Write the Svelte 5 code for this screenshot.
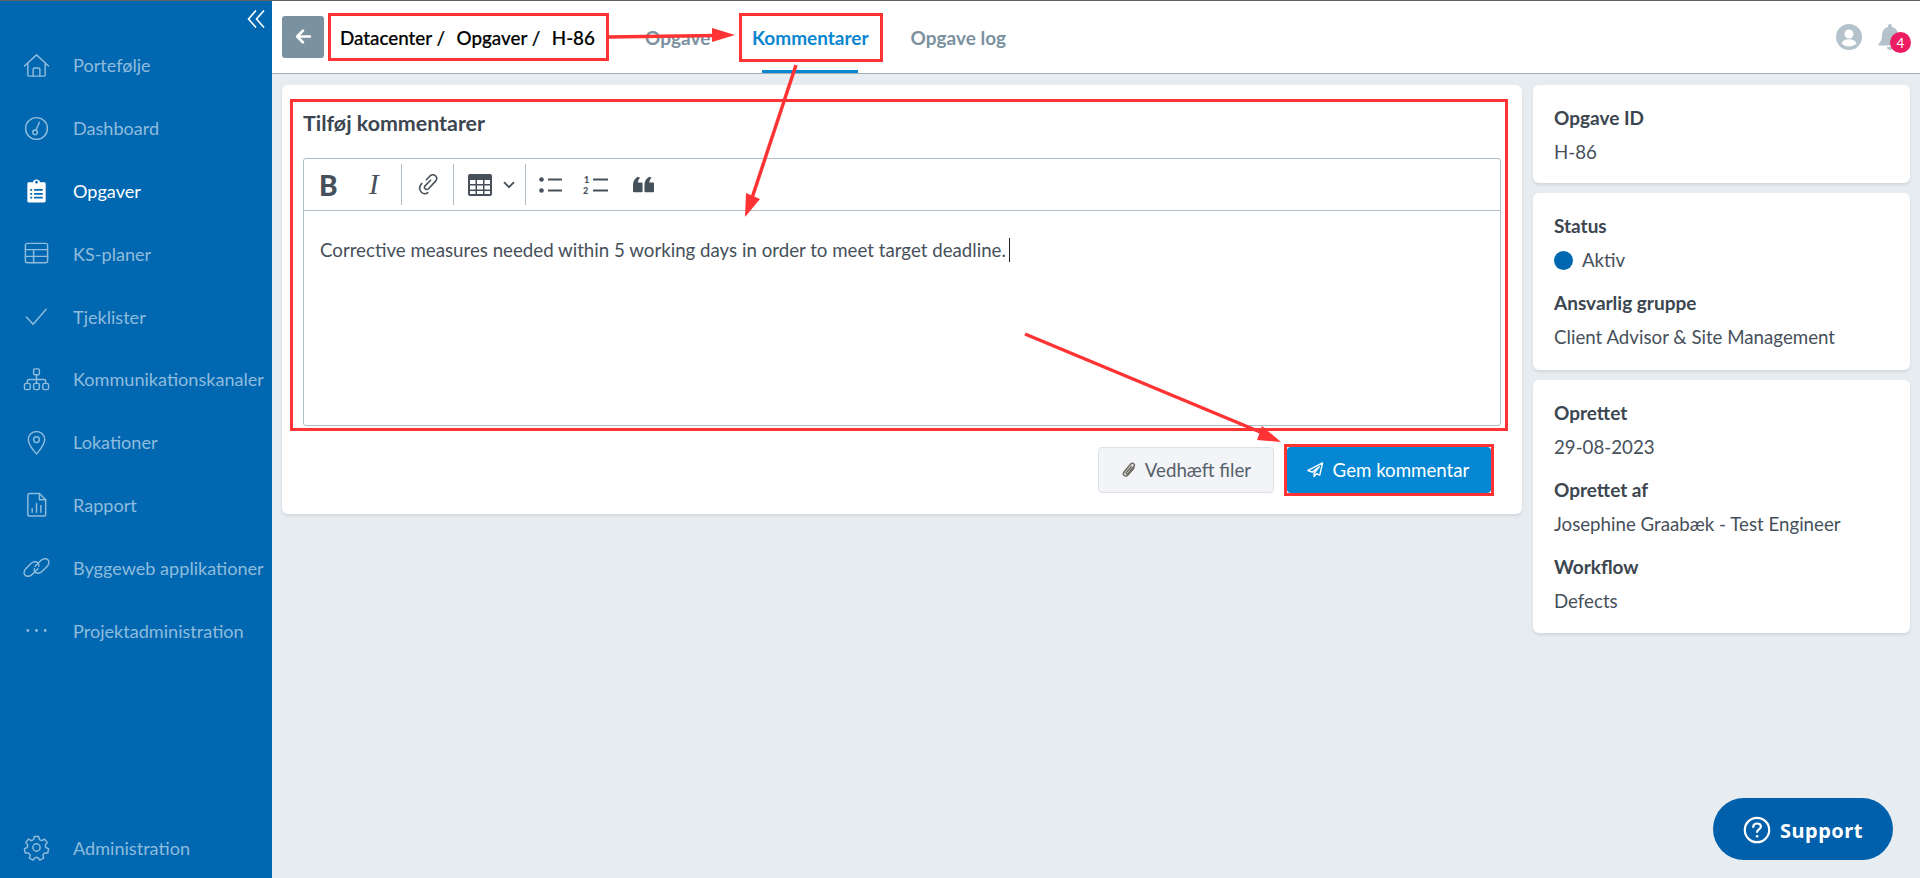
<script>
  const nav = [
    { label: 'Portefølje', icon: 'home' },
    { label: 'Dashboard', icon: 'gauge' },
    { label: 'Opgaver', icon: 'clip', active: true },
    { label: 'KS-planer', icon: 'table' },
    { label: 'Tjeklister', icon: 'check' },
    { label: 'Kommunikationskanaler', icon: 'org' },
    { label: 'Lokationer', icon: 'pin' },
    { label: 'Rapport', icon: 'report' },
    { label: 'Byggeweb applikationer', icon: 'link' },
    { label: 'Projektadministration', icon: 'dots' }
  ];
</script>

{#snippet navIcon(name)}
  <svg class="nav-icon" viewBox="0 0 28 28" fill="none" stroke="currentColor" stroke-width="1.5" stroke-linejoin="round" stroke-linecap="round">
    {#if name === 'home'}
      <path d="M1.5 14.5 14 3 26.5 14.5M5 12v11.500a1.500 1.500 0 0 0 1.500 1.500h15a1.500 1.500 0 0 0 1.500-1.500V12" />
      <path d="M10.500 25v-7a1.500 1.500 0 0 1 1.500-1.500h4a1.500 1.500 0 0 1 1.500 1.500v7" />
    {:else if name === 'gauge'}
      <circle cx="14" cy="14" r="11.300" />
      <circle cx="12.500" cy="18" r="2.400" />
      <path d="M13.500 15.800 17 7.500" />
    {:else if name === 'clip'}
      <path fill="currentColor" stroke="none" fill-rule="evenodd" d="M6 5.500h4.300a3.800 3.800 0 0 1 7.400 0H22a1.500 1.500 0 0 1 1.500 1.500v18a1.500 1.500 0 0 1-1.500 1.500H6A1.500 1.500 0 0 1 4.500 25V7A1.500 1.500 0 0 1 6 5.500ZM14 4a1.400 1.400 0 1 0 0 2.800 1.400 1.400 0 0 0 0-2.800ZM7.500 12.500v1.800h2v-1.800ZM11.500 12.500v1.800h9v-1.800ZM7.500 16.500v1.800h2v-1.800ZM11.500 16.500v1.800h9v-1.800ZM7.500 20.500v1.800h2v-1.800ZM11.500 20.500v1.800h9v-1.800Z" />
    {:else if name === 'table'}
      <rect x="2.500" y="3.500" width="23" height="20" rx="2" />
      <path d="M2.500 10h23M2.500 17h23M11 10v13.500" />
    {:else if name === 'check'}
      <path d="M3.500 14.500 10.500 22 24 6.500" />
    {:else if name === 'org'}
      <rect x="11" y="3" width="6" height="6" rx="1.300" />
      <rect x="1.500" y="18" width="6" height="6.500" rx="1.800" />
      <rect x="11" y="18" width="6" height="6.500" rx="1.800" />
      <rect x="20.500" y="18" width="6" height="6.500" rx="1.800" />
      <path d="M14 9v9M4.500 18v-2.500a1.500 1.500 0 0 1 1.500-1.500h16a1.500 1.500 0 0 1 1.500 1.500V18" />
    {:else if name === 'pin'}
      <path d="M14 26C9.500 20.500 5.500 16.500 5.500 11a8.500 8.500 0 0 1 17 0c0 5.500-4 9.500-8.500 15Z" />
      <circle cx="14" cy="11" r="3" />
    {:else if name === 'report'}
      <path d="M7 2.500h10l6.500 6.500v15a2 2 0 0 1-2 2H7a2 2 0 0 1-2-2V4.500a2 2 0 0 1 2-2Z" />
      <path d="M17 2.500V9h6.500M9.500 22v-3.500M14 22V13M18.500 22v-7" />
    {:else if name === 'link'}
      <path d="M12.500 12.800 18.500 6.800c2.200-2.200 5.500-2.600 7.300-.9s1.300 4.900-.9 7.100L20 18c-2.200 2.200-5.500 2.600-7.300.9-1-1-1.300-2.300-1-3.700" />
      <path d="M15.500 15.200 9.500 21.200c-2.200 2.200-5.500 2.600-7.300.9s-1.300-4.900.9-7.100L8 10c2.200-2.200 5.500-2.600 7.300-.9 1 1 1.300 2.300 1 3.700" />
    {:else if name === 'dots'}
      <path stroke-width="3" d="M5 14h.01M14 14h.01M23 14h.01" />
    {:else if name === 'gear'}
      <circle cx="14" cy="14" r="3.800" />
      <path d="M11.800 2.500h4.400l.8 3.300 2.400 1.100 3-1.600 2.700 3.500-2 2.700.5 2.500 3 1.400-1 4.300-3.400.1-1.600 2 .8 3.300-4 1.900-2.100-2.600h-2.600l-2.100 2.600-4-1.900.8-3.300-1.600-2-3.400-.1-1-4.300 3-1.400.5-2.500-2-2.700 2.700-3.500 3 1.600 2.400-1.100Z" />
    {/if}
  </svg>
{/snippet}

<div class="page">
  <aside class="sidebar">
    <button class="collapse" aria-label="Skjul menu">
      <svg viewBox="0 0 18 18" width="18" height="18" fill="none" stroke="#fff" stroke-width="1.600"><path d="M9 .5 1.500 9 9 17.500M17 .5 9.500 9 17 17.500" /></svg>
    </button>
    <nav class="nav">
      {#each nav as item}
        <a class="nav-item" class:active={item.active}>
          {@render navIcon(item.icon)}
          <span>{item.label}</span>
        </a>
      {/each}
    </nav>
    <a class="nav-item admin">
      {@render navIcon('gear')}
      <span>Administration</span>
    </a>
  </aside>

  <div class="main">
    <header class="topbar">
      <button class="back" aria-label="Tilbage">
        <svg viewBox="0 0 16 16" width="17" height="17" fill="none" stroke="#fff" stroke-width="2.500" stroke-linecap="round" stroke-linejoin="round"><path d="M14 8H2.500M7.500 2.500 2 8l5.500 5.500" /></svg>
      </button>
      <div class="crumbs"><span>Datacenter /</span><span>Opgaver /</span><span>H-86</span></div>
      <div class="tabs">
        <a class="tab first">Opgave</a>
        <a class="tab active">Kommentarer</a>
        <a class="tab">Opgave log</a>
      </div>
      <div class="top-icons">
        <svg class="avatar" viewBox="0 0 26 26" width="26" height="26">
          <circle cx="13" cy="13" r="13" fill="#b4c3cb" />
          <circle cx="13" cy="10" r="4.500" fill="#fff" />
          <path d="M5.500 19.500c1-3 4-4.200 7.500-4.200s6.500 1.200 7.500 4.200c-2 2-4.700 3-7.500 3s-5.500-1-7.500-3Z" fill="#fff" />
        </svg>
        <div class="bell">
          <svg viewBox="0 0 24 26" width="24" height="26" fill="#b4c3cb"><path d="M12 0a2 2 0 0 1 2 2v1c4 1 6 4 6 8 0 5 1.500 7 3.500 9v1.500H.5V20c2-2 3.500-4 3.500-9 0-4 2-7 6-8V2a2 2 0 0 1 2-2ZM9 23h6a3 3 0 0 1-6 0Z" /></svg>
          <span class="badge">4</span>
        </div>
      </div>
    </header>

    <div class="content">
      <section class="card editor-card">
        <h2>Tilføj kommentarer</h2>
        <div class="editor">
          <div class="toolbar">
            <span class="tool b">B</span>
            <span class="tool i">I</span>
            <span class="sep sep-a"></span>
            <svg class="tool-svg link-ic" viewBox="0 0 20 22" width="21" height="23" fill="none" stroke="#46505a" stroke-width="1.500" stroke-linecap="round"><path d="M8 6.500 11.500 2.800c1.500-1.500 4-1.500 5.300 0s1.300 3.600 0 5L10 15c-1 1-2.500 1-3.300.1s-.7-2.100.2-3L12 7" /><path d="M3.500 10 2.500 11.500c-1.300 2-1.200 4.800.5 6.700s4.400 2 6.300.5" /></svg>
            <span class="sep sep-b"></span>
            <svg class="tool-svg table-ic" viewBox="0 0 24 22" width="24" height="22"><path fill="#46505a" fill-rule="evenodd" d="M2 0h20a2 2 0 0 1 2 2v18a2 2 0 0 1-2 2H2a2 2 0 0 1-2-2V2a2 2 0 0 1 2-2Zm0 6v4h5.500V6Zm7 0v4h6V6Zm7.500 0v4H22V6ZM2 11.500v4h5.500v-4Zm7 0v4h6v-4Zm7.500 0v4H22v-4ZM2 17v3h5.500v-3Zm7 0v3h6v-3Zm7.500 0v3H22v-3Z" /></svg>
            <svg class="tool-svg chev" viewBox="0 0 12 8" width="12" height="8" fill="none" stroke="#46505a" stroke-width="1.800"><path d="M1 1.200 6 6.200l5-5" /></svg>
            <span class="sep sep-c"></span>
            <svg class="tool-svg bul" viewBox="0 0 24 18" width="24" height="18"><g fill="#46505a"><circle cx="2.500" cy="3.500" r="2.300" /><circle cx="2.500" cy="14.500" r="2.300" /><rect x="9" y="2.500" width="14" height="2" rx=".5" /><rect x="9" y="13.500" width="14" height="2" rx=".5" /></g></svg>
            <svg class="tool-svg num" viewBox="0 0 26 20" width="26" height="20"><g fill="#46505a"><rect x="10" y="3.500" width="15" height="2" rx=".5" /><rect x="10" y="14.500" width="15" height="2" rx=".5" /></g><text x="1" y="7.500" class="mini">1</text><text x="0" y="19" class="mini">2</text></svg>
            <svg class="tool-svg quote" viewBox="0 0 22 17" width="21" height="17" fill="#46505a"><path d="M5 .5 7.500 1.500C6 3 5.200 4.600 5 6.500h4a1 1 0 0 1 1 1V15.500a1 1 0 0 1-1 1H1a1 1 0 0 1-1-1V9C0 5 2 2.200 5 .5ZM17 .5l2.500 1C18 3 17.200 4.600 17 6.500h4a1 1 0 0 1 1 1V15.500a1 1 0 0 1-1 1h-8a1 1 0 0 1-1-1V9c0-4 2-6.800 5-8.500Z" /></svg>
          </div>
          <div class="text-area">
            <p>Corrective measures needed within 5 working days in order to meet target deadline.<span class="caret"></span></p>
          </div>
        </div>
        <div class="actions">
          <button class="btn ghost">
            <svg viewBox="0 0 16 18" width="16" height="18" fill="none" stroke="#6f6a60" stroke-width="1.500" stroke-linecap="round"><path d="M13 7 7.200 13.800c-1.300 1.500-3 1.600-4 .7s-1-2.700.2-4.100L9.500 3.300c1-1.100 2.400-1.200 3.200-.5s.8 2 0 3L7 12.500c-.5.600-1.200.7-1.600.3s-.4-1.100 0-1.600L10.500 5.500" /></svg>
            Vedhæft filer
          </button>
          <button class="btn primary">
            <svg viewBox="0 0 18 17" width="17" height="16" fill="none" stroke="#fff" stroke-width="1.500" stroke-linejoin="round"><path d="M16.500 1 1 9l4.500 1.800L13 5l-5.500 7v3.500l2.500-3 3.500 1.500Z" /></svg>
            Gem kommentar
          </button>
        </div>
      </section>

      <div class="side">
        <section class="card info one">
          <h3>Opgave ID</h3>
          <p>H-86</p>
        </section>
        <section class="card info two">
          <h3>Status</h3>
          <p class="status"><span class="dot"></span>Aktiv</p>
          <h3>Ansvarlig gruppe</h3>
          <p>Client Advisor &amp; Site Management</p>
        </section>
        <section class="card info three">
          <h3>Oprettet</h3>
          <p>29-08-2023</p>
          <h3>Oprettet af</h3>
          <p>Josephine Graabæk - Test Engineer</p>
          <h3>Workflow</h3>
          <p>Defects</p>
        </section>
      </div>
    </div>
  </div>

  <button class="support">
    <svg viewBox="0 0 28 28" width="28" height="28" fill="none" stroke="#fff" stroke-width="2.200"><circle cx="14" cy="14" r="12.200" /><path stroke-linecap="round" d="M10.200 11c.2-2.300 1.800-3.500 3.900-3.500s3.800 1.300 3.800 3.200c0 2.600-3.800 2.800-3.800 5.300" /><path stroke-width="2.600" stroke-linecap="round" d="M14.100 20.300h.01" /></svg>
    Support
  </button>

  <svg class="annotations" viewBox="0 0 1920 878" width="1920" height="878" fill="none" stroke="#ff3333" stroke-width="3" aria-hidden="true">
    <rect x="329.500" y="14.500" width="278" height="45" />
    <rect x="740.500" y="14.500" width="141" height="46" />
    <rect x="291.500" y="100.500" width="1215" height="329" />
    <rect x="1285.500" y="445.500" width="207" height="49" />
    <path d="M608 37 715 35.500" stroke-width="3.500" />
    <path d="M735 35 712 28v14Z" fill="#ff3333" stroke="none" />
    <path d="M796 65 752 198" stroke-width="3.500" />
    <path d="M745 217 746 193 760 199Z" fill="#ff3333" stroke="none" />
    <path d="M1025 334 1265 434" stroke-width="3.500" />
    <path d="M1281 442 1262 426 1257 440Z" fill="#ff3333" stroke="none" />
  </svg>
</div>

<style>
  :global(body) {
    margin: 0;
    font-family: "Lato", "Liberation Sans", sans-serif;
    font-size: 18.700px;
    color: #46505a;
    overflow: hidden;
  }
  button {
    font-family: inherit;
    border: 0;
    padding: 0;
    cursor: pointer;
  }
  h2, h3, p {
    margin: 0;
  }
  .page {
    position: relative;
    display: flex;
    width: 1920px;
    height: 878px;
    box-sizing: border-box;
    border-top: 1px solid #5a6268;
    background: #e7ecf0;
  }
  .sidebar {
    width: 272px;
    flex: none;
    background: #0067b0;
    display: flex;
    flex-direction: column;
    color: #8fbcdd;
  }
  .collapse {
    align-self: flex-end;
    background: none;
    width: 18px;
    height: 18px;
    margin: 9px 7px 0 0;
  }
  .nav {
    display: flex;
    flex-direction: column;
    margin-top: 6px;
  }
  .nav-item {
    display: flex;
    align-items: center;
    gap: 23px;
    height: 62.800px;
    padding-left: 23px;
    font-size: 18.100px;
    white-space: nowrap;
  }
  .nav-item.active {
    color: #fff;
  }
  .admin {
    margin-top: auto;
    margin-bottom: -1px;
  }
  .nav-icon {
    width: 27px;
    height: 27px;
    flex: none;
  }
  .main {
    flex: 1;
    min-width: 0;
    display: flex;
    flex-direction: column;
  }
  .topbar {
    height: 72px;
    flex: none;
    background: #fff;
    border-bottom: 1px solid #a3aeb5;
    display: flex;
    align-items: center;
    padding-left: 10px;
    padding-right: 19px;
  }
  .back {
    width: 42px;
    height: 42px;
    border-radius: 3px;
    background: #7a919f;
    display: flex;
    align-items: center;
    justify-content: center;
    margin-top: -1px;
  }
  .crumbs {
    display: flex;
    gap: 11.500px;
    margin-left: 16px;
    margin-top: 1px;
    width: 290px;
    color: #000;
    font-size: 18.800px;
    font-weight: 500;
    -webkit-text-stroke: 0.2px #000;
    white-space: nowrap;
  }
  .tabs {
    display: flex;
    align-self: stretch;
    gap: 42px;
    margin-left: 15px;
  }
  .tab {
    display: flex;
    align-items: center;
    position: relative;
    color: #7b919f;
    font-size: 19px;
    font-weight: 700;
  }
  .tab.first {
    width: 65px;
  }
  .tab.active {
    color: #0a86d0;
  }
  .tab.active::after {
    content: "";
    position: absolute;
    left: 10px;
    right: 11px;
    bottom: 0;
    height: 3px;
    background: #0a86d0;
  }
  .top-icons {
    margin-left: auto;
    display: flex;
    align-items: center;
    gap: 16px;
    margin-right: -1px;
  }
  .avatar {
    display: block;
  }
  .bell {
    position: relative;
    width: 24px;
    height: 26px;
  }
  .bell svg {
    display: block;
  }
  .badge {
    position: absolute;
    left: 12px;
    top: 8px;
    width: 21px;
    height: 21px;
    border-radius: 50%;
    background: #ec1c63;
    color: #fff;
    font-size: 13.500px;
    display: flex;
    align-items: center;
    justify-content: center;
  }
  .content {
    flex: 1;
    display: flex;
    align-items: flex-start;
    gap: 11px;
    padding: 11px 10px 0;
  }
  .card {
    background: #fff;
    border-radius: 6px;
    box-shadow: 0 2px 3px rgba(60, 80, 100, 0.13);
    box-sizing: border-box;
  }
  .editor-card {
    width: 1240px;
    height: 429px;
    flex: none;
    padding: 26px 21px 0;
  }
  h2 {
    font-size: 21.400px;
    line-height: 24px;
    font-weight: 700;
    color: #3c4650;
    margin-bottom: 23px;
  }
  .editor {
    height: 268px;
    box-sizing: border-box;
    border: 1px solid #aebdc6;
    border-radius: 3px;
    display: flex;
    flex-direction: column;
  }
  .toolbar {
    height: 51px;
    flex: none;
    border-bottom: 1px solid #aebdc6;
    display: flex;
    align-items: center;
  }
  .tool {
    color: #46505a;
    line-height: 1;
  }
  .b {
    font-size: 28px;
    font-weight: 900;
    margin-left: 15px;
    width: 19px;
  }
  .i {
    font-family: "Liberation Serif", serif;
    font-style: italic;
    font-size: 29px;
    margin-left: 31px;
    width: 13px;
  }
  .sep {
    width: 1px;
    height: 41px;
    background: #aebdc6;
    flex: none;
  }
  .sep-a {
    margin-left: 19px;
  }
  .tool-svg {
    flex: none;
    display: block;
  }
  .link-ic {
    margin-left: 16px;
  }
  .sep-b {
    margin-left: 14px;
  }
  .table-ic {
    margin-left: 14px;
  }
  .chev {
    margin-left: 11px;
  }
  .sep-c {
    margin-left: 10px;
  }
  .bul {
    margin-left: 13px;
  }
  .num {
    margin-left: 20px;
  }
  .quote {
    margin-left: 24px;
  }
  .mini {
    font-family: "Lato", sans-serif;
    font-size: 9px;
    font-weight: 900;
    fill: #46505a;
  }
  .text-area {
    flex: 1;
    padding: 23px 16px 0;
  }
  .text-area p {
    line-height: 32px;
    font-size: 18.700px;
    color: #46505a;
    display: flex;
    align-items: center;
  }
  .caret {
    display: inline-block;
    width: 1.500px;
    height: 24px;
    background: #222;
    margin-left: 3px;
  }
  .actions {
    display: flex;
    justify-content: flex-end;
    gap: 13px;
    margin-top: 21px;
    padding-right: 10px;
  }
  .btn {
    height: 46px;
    border-radius: 4px;
    font-size: 18.700px;
    display: flex;
    align-items: center;
    justify-content: center;
    gap: 8px;
    box-sizing: border-box;
  }
  .ghost {
    width: 176px;
    background: #f2f4f8;
    border: 1px solid #dde1e6;
    color: #56606a;
  }
  .primary {
    width: 204px;
    background: #0587d3;
    color: #fff;
    gap: 9px;
    padding-right: 2px;
  }
  .side {
    width: 377px;
    flex: none;
    display: flex;
    flex-direction: column;
    gap: 10px;
  }
  .info {
    padding: 21px 21px 0;
  }
  .info h3 {
    font-size: 19px;
    font-weight: 700;
    line-height: 24px;
    color: #3c4650;
    margin-bottom: 10px;
  }
  .info p {
    font-size: 18.700px;
    line-height: 24px;
    color: #46505a;
    margin-bottom: 19px;
  }
  .one {
    height: 98px;
  }
  .two {
    height: 177px;
  }
  .three {
    height: 253px;
  }
  .status {
    display: flex;
    align-items: center;
    gap: 9px;
  }
  .dot {
    width: 19px;
    height: 19px;
    border-radius: 50%;
    background: #0067b0;
  }
  .support {
    position: absolute;
    left: 1713px;
    top: 797px;
    width: 180px;
    height: 62px;
    border-radius: 31px;
    background: #0060ab;
    color: #fff;
    font-family: "Noto Sans", sans-serif;
    font-size: 20px;
    font-weight: 700;
    letter-spacing: 0.5px;
    display: flex;
    align-items: center;
    justify-content: center;
    gap: 9px;
    padding-top: 2px;
    box-sizing: border-box;
  }
  .annotations {
    position: absolute;
    left: 0;
    top: -1px;
    pointer-events: none;
  }
</style>
